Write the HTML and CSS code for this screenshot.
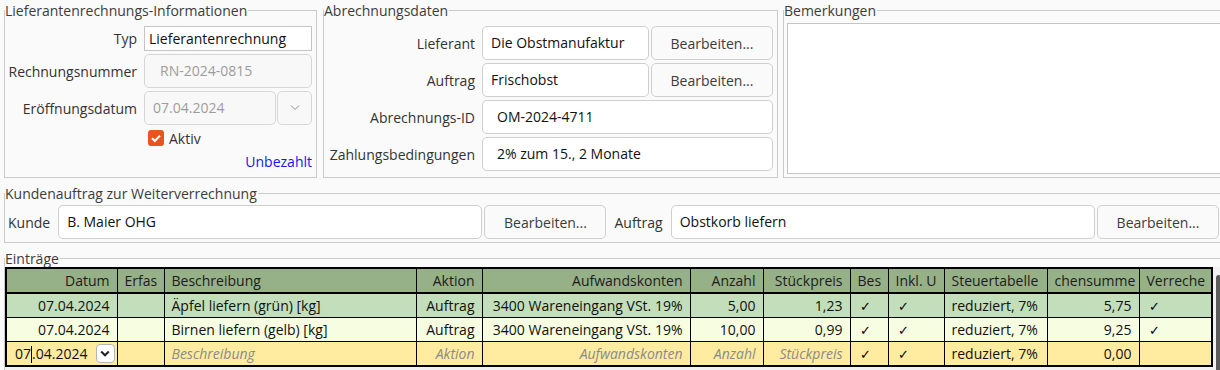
FILE: index.html
```html
<!DOCTYPE html>
<html lang="de">
<head>
    <meta charset="UTF-8">
    <title>Lieferantenrechnung</title>
    <link rel="stylesheet" href="styles.css">
</head>
<body>
<div class="window">
    <div class="top">
        <fieldset class="group info">
            <legend>Lieferantenrechnungs-Informationen</legend>
            <div class="info-form">
                <label>Typ</label>
                <div class="field plain">Lieferantenrechnung</div>
                <label>Rechnungsnummer</label>
                <div class="field disabled number">RN-2024-0815</div>
                <label>Eröffnungsdatum</label>
                <div class="date-edit">
                    <div class="field disabled date">07.04.2024</div>
                    <div class="drop-btn">
                        <svg width="10" height="6" viewBox="0 0 10 6"><path d="M1 0.5l4 4 4-4" fill="none" stroke="#8c8c8c" stroke-width="1"/></svg>
                    </div>
                </div>
                <span></span>
                <div class="check">
                    <svg width="16" height="16" viewBox="0 0 16 16"><rect width="16" height="16" rx="3" fill="#e95420"/><path d="M4 8.2l2.8 2.8L12 5.6" fill="none" stroke="#fff" stroke-width="2"/></svg>
                    <span>Aktiv</span>
                </div>
                <span></span>
                <a class="status">Unbezahlt</a>
            </div>
        </fieldset>

        <fieldset class="group billing">
            <legend>Abrechnungsdaten</legend>
            <div class="billing-form">
                <label>Lieferant</label>
                <div class="field">Die Obstmanufaktur</div>
                <button class="btn">Bearbeiten...</button>
                <label>Auftrag</label>
                <div class="field">Frischobst</div>
                <button class="btn">Bearbeiten...</button>
                <label>Abrechnungs-ID</label>
                <div class="field wide indent">OM-2024-4711</div>
                <label>Zahlungsbedingungen</label>
                <div class="field wide indent">2% zum 15., 2 Monate</div>
            </div>
        </fieldset>

        <fieldset class="group notes">
            <legend>Bemerkungen</legend>
            <div class="notes-body">
                <div class="notes-box"></div>
            </div>
        </fieldset>
    </div>

    <fieldset class="group order">
        <legend>Kundenauftrag zur Weiterverrechnung</legend>
        <div class="order-row">
            <label>Kunde</label>
            <div class="pick">
                <div class="field">B. Maier OHG</div>
                <button class="btn">Bearbeiten...</button>
            </div>
            <label>Auftrag</label>
            <div class="pick">
                <div class="field">Obstkorb liefern</div>
                <button class="btn">Bearbeiten...</button>
            </div>
        </div>
    </fieldset>

    <fieldset class="group entries">
        <legend>Einträge</legend>
        <div class="table-view">
            <table>
                <colgroup>
                    <col style="width:111px"><col style="width:47px"><col style="width:252px"><col style="width:66px">
                    <col style="width:208px"><col style="width:73px"><col style="width:87px"><col style="width:38px">
                    <col style="width:56px"><col style="width:103px"><col style="width:92px"><col style="width:73px">
                </colgroup>
                <thead>
                    <tr>
                        <th class="r">Datum</th>
                        <th>Erfas</th>
                        <th>Beschreibung</th>
                        <th class="r">Aktion</th>
                        <th class="r">Aufwandskonten</th>
                        <th class="r">Anzahl</th>
                        <th class="r">Stückpreis</th>
                        <th>Bes</th>
                        <th>Inkl. U</th>
                        <th>Steuertabelle</th>
                        <th class="r">chensumme</th>
                        <th>Verreche</th>
                    </tr>
                </thead>
                <tbody>
                    <tr class="row-green">
                        <td class="r">07.04.2024</td>
                        <td></td>
                        <td>Äpfel liefern (grün) [kg]</td>
                        <td class="r">Auftrag</td>
                        <td class="r">3400 Wareneingang VSt. 19%</td>
                        <td class="r">5,00</td>
                        <td class="r">1,23</td>
                        <td class="tick">✓</td>
                        <td class="tick">✓</td>
                        <td>reduziert, 7%</td>
                        <td class="r">5,75</td>
                        <td class="tick">✓</td>
                    </tr>
                    <tr class="row-light">
                        <td class="r">07.04.2024</td>
                        <td></td>
                        <td>Birnen liefern (gelb) [kg]</td>
                        <td class="r">Auftrag</td>
                        <td class="r">3400 Wareneingang VSt. 19%</td>
                        <td class="r">10,00</td>
                        <td class="r">0,99</td>
                        <td class="tick">✓</td>
                        <td class="tick">✓</td>
                        <td>reduziert, 7%</td>
                        <td class="r">9,25</td>
                        <td class="tick">✓</td>
                    </tr>
                    <tr class="row-new">
                        <td class="editing">
                            <div class="cell-edit">
                                <span>07<i class="caret"></i>.04.2024</span>
                                <span class="cell-drop">
                                    <svg width="10" height="7" viewBox="0 0 10 7"><path d="M1.2 1.5l3.8 3.8 3.8-3.8" fill="none" stroke="#222" stroke-width="2"/></svg>
                                </span>
                            </div>
                        </td>
                        <td></td>
                        <td class="hint">Beschreibung</td>
                        <td class="r hint">Aktion</td>
                        <td class="r hint">Aufwandskonten</td>
                        <td class="r hint">Anzahl</td>
                        <td class="r hint">Stückpreis</td>
                        <td class="tick">✓</td>
                        <td class="tick">✓</td>
                        <td>reduziert, 7%</td>
                        <td class="r">0,00</td>
                        <td></td>
                    </tr>
                </tbody>
            </table>
            <div class="scrollbar"></div>
        </div>
    </fieldset>
</div>
</body>
</html>
```

FILE: styles.css
```css
body {
    margin: 0;
    background-color: #fafafa;
    font-family: "Open Sans", "Noto Sans", sans-serif;
    font-size: 14px;
    color: #3c3c3c;
    overflow: hidden;
}
.window {
    width: 1219px;
    padding: 2px 0 0 4px;
}
.top {
    display: flex;
    align-items: stretch;
}
.group {
    margin: 0;
    padding: 0;
    border: 1px solid #cacaca;
    min-width: 0;
}
.group legend {
    padding: 0 1px 0 0;
    line-height: 17px;
    color: #3c3c3c;
}
.info {
    width: 313px;
    box-sizing: border-box;
}
.billing {
    width: 455px;
    box-sizing: border-box;
    margin-left: 6px;
}
.notes {
    flex: 1;
    margin-left: 5px;
}
label {
    text-align: right;
    white-space: nowrap;
    color: #333;
}
.field {
    box-sizing: border-box;
    height: 34px;
    line-height: 32px;
    padding: 0 8px;
    background-color: #fff;
    border: 1px solid #cfcfcf;
    border-radius: 5px;
    color: #111;
    white-space: nowrap;
    overflow: hidden;
}
.field.plain {
    height: 25px;
    line-height: 23px;
    padding: 0 4px;
    border-radius: 0;
    border-color: #c4c4c4;
}
.field.disabled {
    background-color: #f8f8f8;
    color: #9c9c9c;
    border-color: #d6d6d6;
}
.field.number {
    padding-left: 15px;
}
.field.indent {
    padding-left: 14px;
}
.btn {
    box-sizing: border-box;
    height: 34px;
    background-color: #fafafa;
    border: 1px solid #cfcfcf;
    border-radius: 5px;
    font-family: inherit;
    font-size: 14px;
    color: #3c3c3c;
    padding: 0;
}

/* Lieferantenrechnungs-Informationen */
.info-form {
    display: grid;
    grid-template-columns: 139px 168px;
    grid-template-rows: 25px 34px 34px 20px 20px;
    row-gap: 3px;
    align-items: center;
    padding: 7px 4px 5px 0;
}
.info-form label {
    padding-right: 7px;
}
.date-edit {
    display: flex;
    gap: 1px;
}
.date-edit .field {
    flex: 1;
}
.drop-btn {
    box-sizing: border-box;
    width: 35px;
    height: 34px;
    border: 1px solid #d6d6d6;
    border-radius: 5px;
    background-color: #f8f8f8;
    display: flex;
    align-items: center;
    justify-content: center;
}
.check {
    display: flex;
    align-items: center;
    gap: 5px;
    padding-left: 4px;
    color: #333;
}
.status {
    text-align: right;
    color: #1515f0;
}

/* Abrechnungsdaten */
.billing-form {
    display: grid;
    grid-template-columns: 158px 167px 124px;
    grid-template-rows: repeat(4, 34px);
    row-gap: 3px;
    align-items: center;
    padding: 7px 4px 5px 0;
}
.billing-form label {
    padding-right: 7px;
}
.billing-form .btn {
    margin-left: 2px;
}
.billing-form .wide {
    grid-column: 2 / 4;
}

/* Bemerkungen */
.notes-body {
    padding: 4px 0 3px 3px;
}
.notes-box {
    height: 151px;
    box-sizing: border-box;
    background-color: #fff;
    border: 1px solid #c4c4c4;
    border-right: none;
}

/* Kundenauftrag */
.order {
    margin-top: 7px;
}
.order-row {
    display: flex;
    align-items: center;
    gap: 8px;
    padding: 3px 3px 3px 3px;
}
.pick {
    flex: 1;
    display: flex;
    gap: 2px;
}
.pick .field {
    flex: 1;
}
.pick .btn {
    width: 122px;
}

/* Einträge */
.entries {
    margin-top: 7px;
}
.table-view {
    display: flex;
    align-items: flex-start;
    height: 110px;
    background-color: #f1f1f1;
}
table {
    border-collapse: collapse;
    table-layout: fixed;
    width: 1206px;
    border: 2px solid #000;
    color: #111;
}
th, td {
    height: 23px;
    padding: 0 7px;
    border: 1px solid #000;
    text-align: left;
    white-space: nowrap;
    overflow: hidden;
}
th {
    font-weight: normal;
    background-color: #96b088;
    color: #1c1c1c;
    border-bottom: 2px solid #000;
}
.r {
    text-align: right;
}
.row-green td {
    background-color: #c2deba;
}
.row-light td {
    background-color: #f6fde1;
}
.row-new td {
    background-color: #ffeca0;
}
.tick {
    font-size: 13px;
    padding-left: 9px;
    color: #000;
}
.hint {
    font-style: italic;
    color: #8a8a8a;
}
td.editing {
    padding: 0 2px 0 8px;
}
.cell-edit {
    display: flex;
    align-items: center;
    justify-content: space-between;
}
.caret {
    display: inline-block;
    width: 1px;
    height: 17px;
    background-color: #000;
    vertical-align: -4px;
}
.cell-drop {
    box-sizing: border-box;
    width: 19px;
    height: 19px;
    background-color: #fff;
    border: 1px solid #b5b5b5;
    border-radius: 4px;
    display: flex;
    align-items: center;
    justify-content: center;
}
.scrollbar {
    width: 5px;
    height: 110px;
    margin: 8px 0 0 3px;
    border-radius: 3px;
    background-color: #5c5c5c;
}
```
